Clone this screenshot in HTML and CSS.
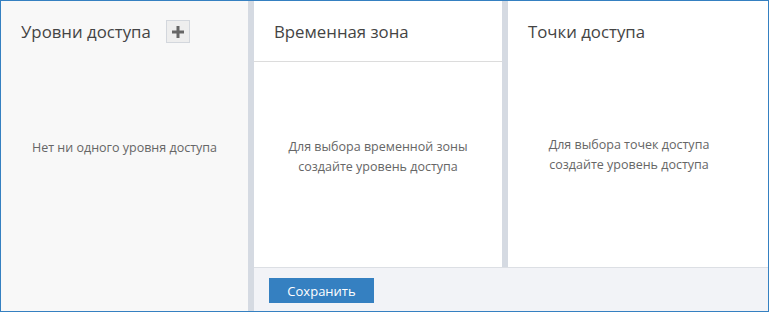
FILE: index.html
```html
<!DOCTYPE html>
<html lang="ru">
<head>
  <meta charset="UTF-8" />
  <title>Уровни доступа</title>
  <link rel="stylesheet" href="styles.css">
</head>
<body>
  <div class="access-window">
    <div class="levels-col">
      <div class="col-header">
        <span class="col-title">Уровни доступа</span>
        <button class="add-btn" title="Добавить">
          <svg width="12" height="12" viewBox="0 0 12 12">
            <path d="M4.5 0h3v4.5h4.5v3h-4.5v4.5h-3v-4.5h-4.5v-3h4.5z" fill="#666"/>
          </svg>
        </button>
      </div>
      <div class="empty-text levels-empty">Нет ни одного уровня доступа</div>
    </div>

    <div class="main-part">
      <div class="panels">
        <div class="panel zone-panel">
          <div class="col-header with-line">
            <span class="col-title">Временная зона</span>
          </div>
          <div class="empty-text panel-empty">Для выбора временной зоны<br>создайте уровень доступа</div>
        </div>
        <div class="panel points-panel">
          <div class="col-header">
            <span class="col-title">Точки доступа</span>
          </div>
          <div class="empty-text panel-empty points-empty">Для выбора точек доступа<br>создайте уровень доступа</div>
        </div>
      </div>
      <div class="footer">
        <button class="save-btn">Сохранить</button>
      </div>
    </div>
  </div>
</body>
</html>
```

FILE: styles.css
```css
:root {
  --blue: #3580c1;
  --sep: #d5dae2;
  --text: #444;
  --muted: #666;
}

* {
  margin: 0;
  padding: 0;
  box-sizing: border-box;
}

body {
  font-family: 'Open Sans', 'DejaVu Sans', sans-serif;
  background: #fff;
  color: var(--text);
}

.access-window {
  width: 769px;
  height: 312px;
  border: 1px solid var(--blue);
  display: flex;
}

.levels-col {
  width: 253px;
  background: #f8f8f8;
  border-right: 6px solid var(--sep);
}

.col-header {
  height: 61px;
  display: flex;
  align-items: center;
  gap: 15px;
  padding-left: 20px;
}

.col-header.with-line {
  border-bottom: 1px solid #dcdcdc;
}

.col-title {
  font-size: 16.8px;
  color: var(--text);
}

.add-btn {
  width: 24px;
  height: 23px;
  background: #eee;
  border: 1px solid #d3d7dd;
  display: flex;
  align-items: center;
  justify-content: center;
  cursor: pointer;
}

.empty-text {
  font-size: 12.5px;
  color: var(--muted);
  text-align: center;
  line-height: 20px;
}

.levels-empty {
  padding-top: 76px;
}

.main-part {
  flex: 1;
  display: flex;
  flex-direction: column;
}

.panels {
  flex: 1;
  display: flex;
}

.panel {
  background: #fff;
}

.zone-panel {
  width: 254px;
  border-right: 6px solid var(--sep);
}

.points-panel {
  flex: 1;
}

.panel-empty {
  padding-top: 75px;
}

.points-empty {
  padding-top: 73px;
  padding-right: 18px;
}

.footer {
  height: 44px;
  background: #f2f3f7;
  border-top: 1px solid #dcdfe4;
  padding: 10px 0 0 15px;
}

.save-btn {
  width: 105px;
  height: 25px;
  background: var(--blue);
  color: #fff;
  border: none;
  font-family: 'Open Sans', 'DejaVu Sans', sans-serif;
  font-size: 13px;
  cursor: pointer;
}
```
